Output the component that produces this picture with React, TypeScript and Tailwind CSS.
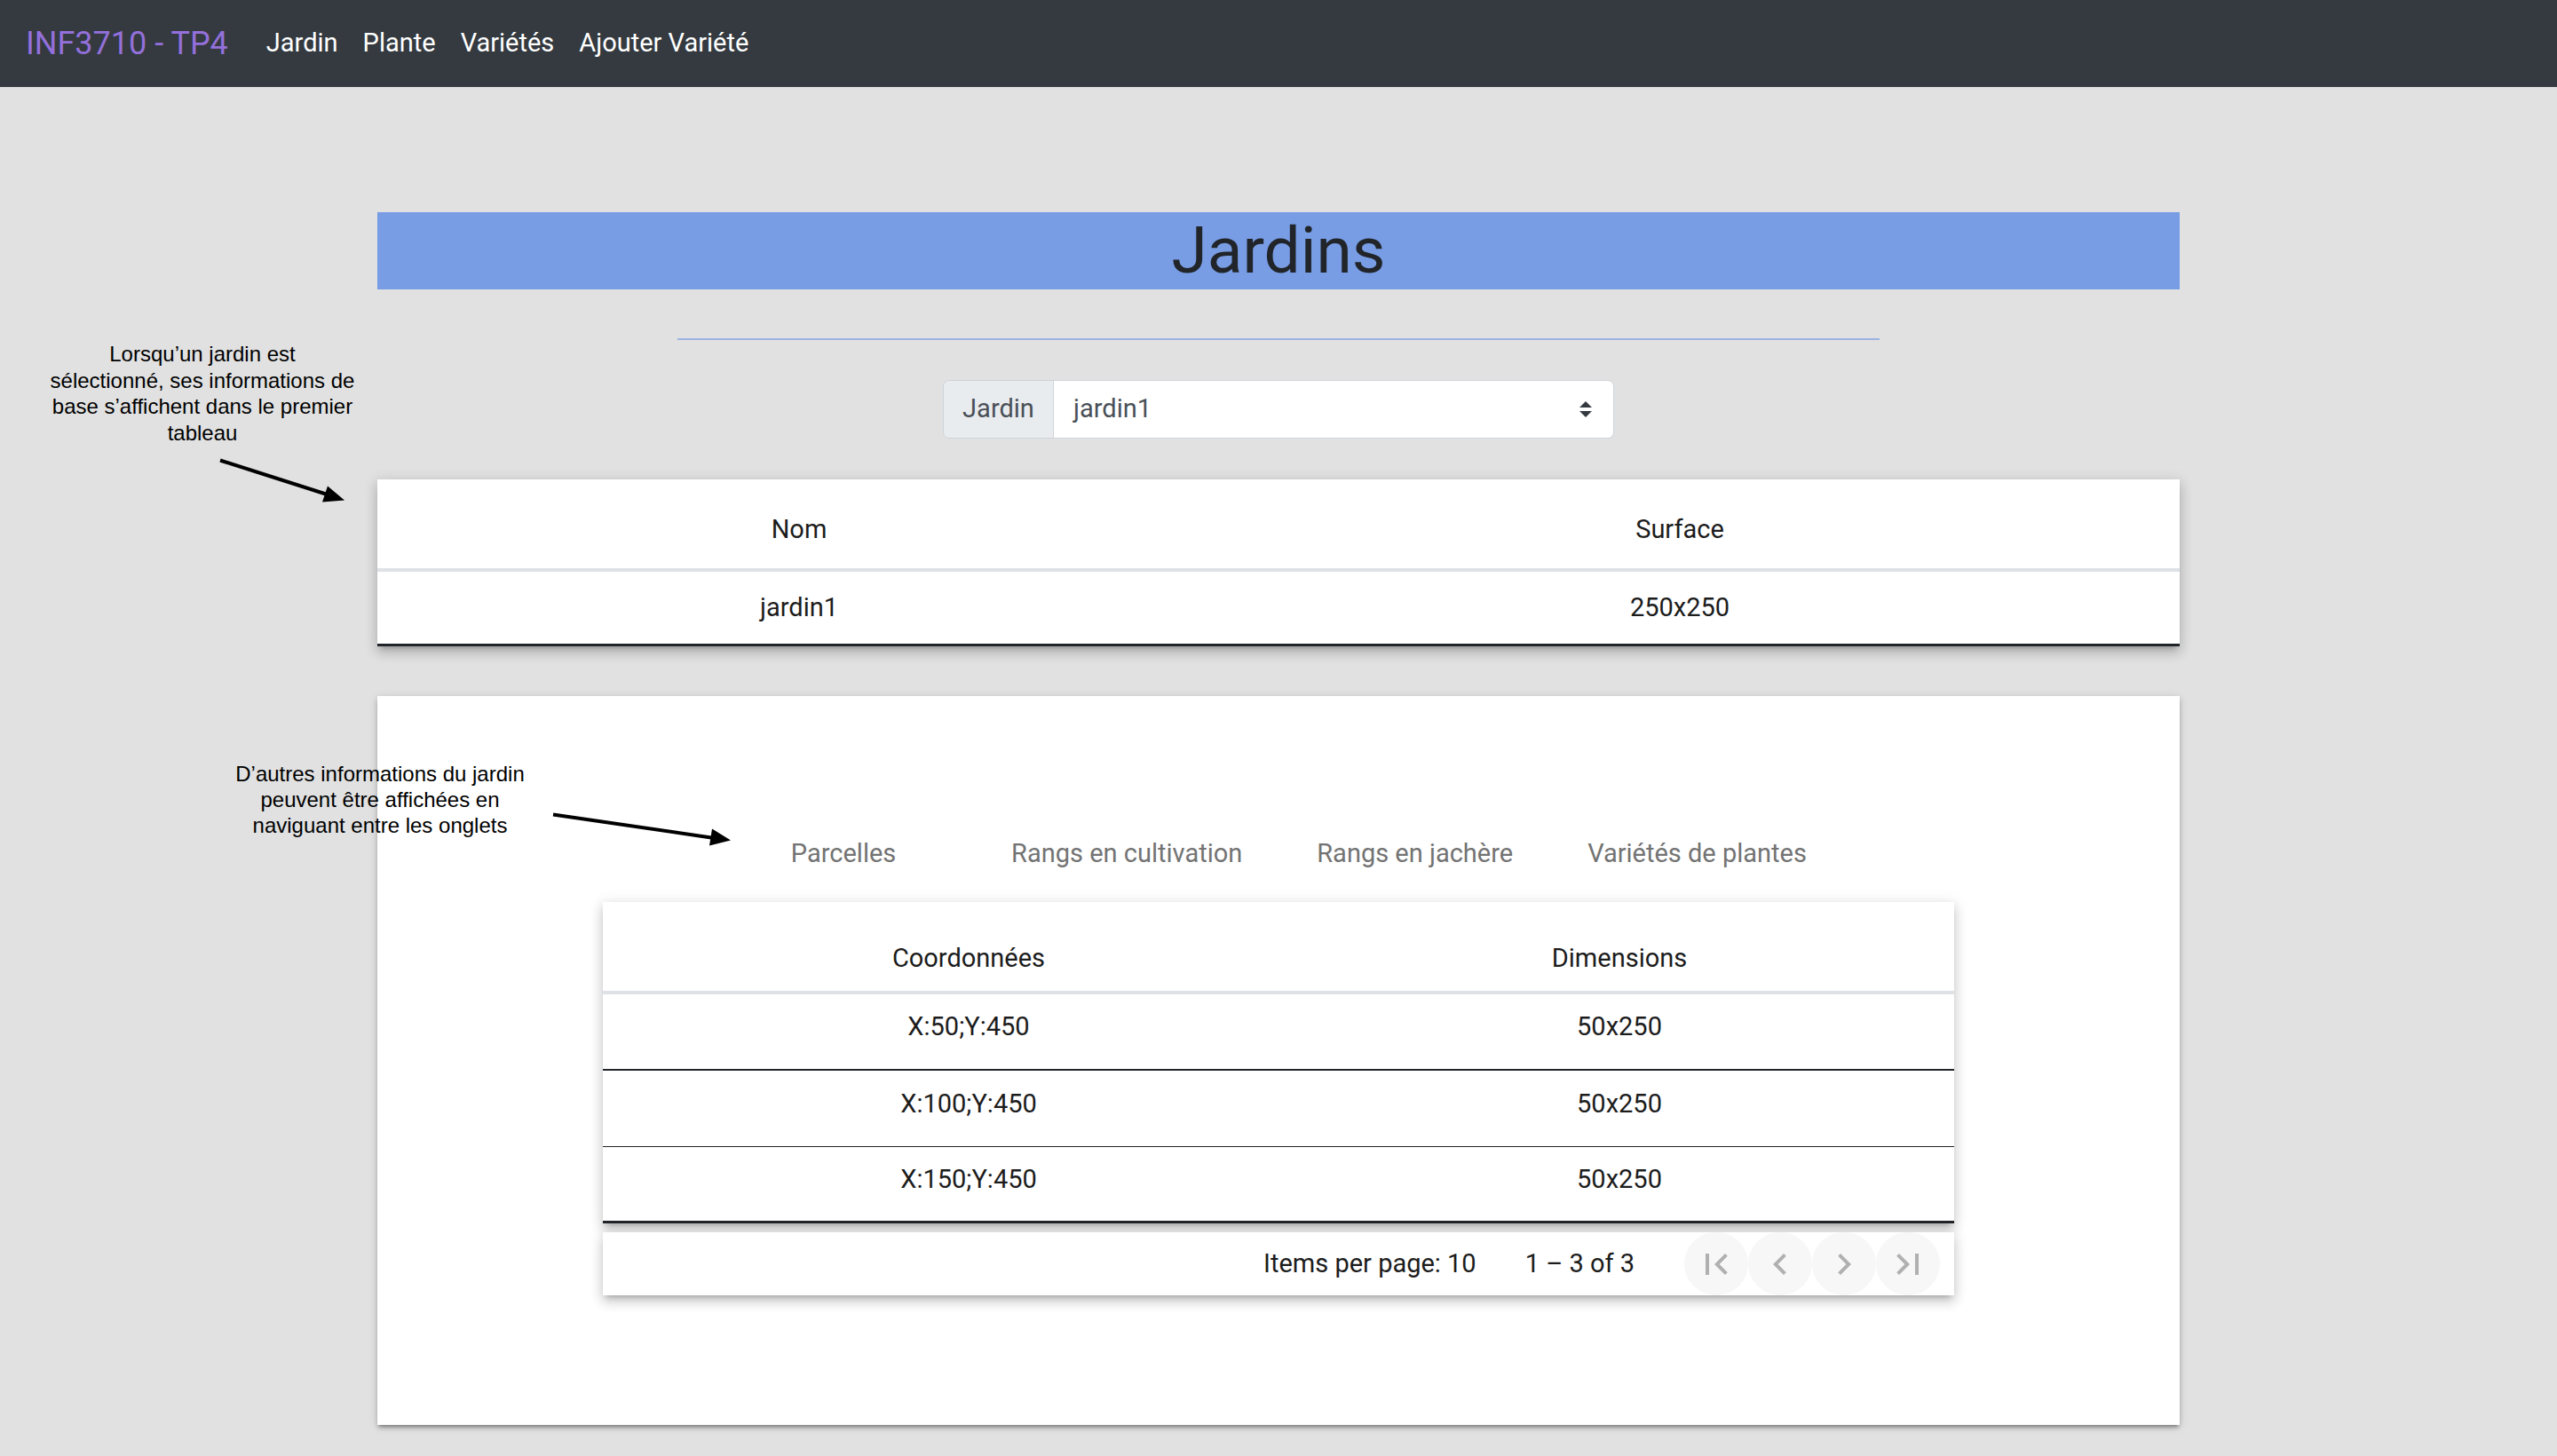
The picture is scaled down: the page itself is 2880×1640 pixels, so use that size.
import { ReactNode } from "react";

const navLinks = ["Jardin", "Plante", "Variétés", "Ajouter Variété"];
const tabs = ["Parcelles", "Rangs en cultivation", "Rangs en jachère", "Variétés de plantes"];
const parcelles = [
  { coord: "X:50;Y:450", dim: "50x250", border: "border-b-2" },
  { coord: "X:100;Y:450", dim: "50x250", border: "border-b" },
  { coord: "X:150;Y:450", dim: "50x250", border: "border-b-[3px]" },
];

const tableShadow =
  "shadow-[0_6px_6px_-4px_rgba(0,0,0,0.2),0_8px_12px_1px_rgba(0,0,0,0.12),0_2px_14px_2px_rgba(0,0,0,0.1)]";

function PagerButton({ children }: { children: ReactNode }) {
  return (
    <button className="w-[72px] h-[71px] rounded-full bg-[#f7f7f7] flex items-center justify-center">
      <svg viewBox="0 0 24 24" className="w-[48px] h-[48px] fill-[#b0b0b0]">
        {children}
      </svg>
    </button>
  );
}

function Annotations() {
  return (
    <>
      <p className="absolute left-[28px] top-[384px] w-[400px] text-center text-[24px] leading-[29.5px] text-black font-['Liberation_Sans',Arial,sans-serif]">
        Lorsqu’un jardin est
        <br />
        sélectionné, ses informations de
        <br />
        base s’affichent dans le premier
        <br />
        tableau
      </p>
      <p className="absolute left-[228px] top-[857px] w-[400px] text-center text-[24px] leading-[29px] text-black font-['Liberation_Sans',Arial,sans-serif]">
        D’autres informations du jardin
        <br />
        peuvent être affichées en
        <br />
        naviguant entre les onglets
      </p>
      <svg className="absolute inset-0 w-full h-full pointer-events-none" viewBox="0 0 2880 1640">
        <line x1="248" y1="518" x2="367" y2="556" stroke="black" strokeWidth="4" />
        <polygon points="388,563 369,547 363,565" fill="black" />
        <line x1="623" y1="917" x2="801" y2="943" stroke="black" strokeWidth="4" />
        <polygon points="823,946 802,933 799,952" fill="black" />
      </svg>
    </>
  );
}

export default function App() {
  return (
    <div className="relative min-h-screen bg-[#e1e1e1] font-['Roboto',sans-serif] text-[#212529]">
      {/* Navbar */}
      <nav className="h-[98px] bg-[#343a40] flex items-center pl-[29px]">
        <span className="text-[36px] text-[#9370db] mr-[29px]">INF3710 - TP4</span>
        <div className="flex items-center">
          {navLinks.map(l => (
            <a key={l} className="px-[14px] text-[29px] text-white">
              {l}
            </a>
          ))}
        </div>
      </nav>

      <main className="w-[2030px] mx-auto pt-[141px] pb-[36px]">
        {/* Title */}
        <h1 className="h-[87px] bg-[#789de5] text-center text-[73px] leading-[87px] font-normal text-[#212529]">
          Jardins
        </h1>
        <div className="w-[1354px] h-[2px] mx-auto mt-[55px] bg-[#9db3e2]" />

        {/* Jardin select */}
        <div className="mt-[45px] mx-auto w-[756px] h-[66px] flex rounded-[7px] border border-[#ced4da] overflow-hidden text-[29px] text-[#495057]">
          <div className="w-[124px] bg-[#e9ecef] border-r border-[#ced4da] flex items-center justify-center">
            Jardin
          </div>
          <div className="flex-1 bg-white flex items-center justify-between pl-[22px] pr-[24px]">
            <span>jardin1</span>
            <svg viewBox="0 0 14 18" className="w-[14px] h-[18px] fill-[#343a40]">
              <polygon points="0,7 7,0 14,7" />
              <polygon points="0,11 7,18 14,11" />
            </svg>
          </div>
        </div>

        {/* Garden info table */}
        <div className={`mt-[46px] bg-white ${tableShadow} text-[29px] text-[#1c1c1c]`}>
          <div className="h-[104px] grid grid-cols-[950px_1fr] items-center pt-[14px] border-b-4 border-[#dee2e6]">
            <div className="text-center">Nom</div>
            <div className="text-center pr-[46px]">Surface</div>
          </div>
          <div className="h-[84px] grid grid-cols-[950px_1fr] items-center border-b-[3px] border-[#212529]">
            <div className="text-center">jardin1</div>
            <div className="text-center pr-[46px]">250x250</div>
          </div>
        </div>

        {/* Details card with tabs */}
        <div className="mt-[56px] h-[821px] bg-white pt-[134px] shadow-[0_4px_4px_-2px_rgba(0,0,0,0.3),0_3px_5px_0_rgba(0,0,0,0.14),0_2px_10px_0_rgba(0,0,0,0.12)]">
          <div className="h-[88px] flex justify-center">
            {tabs.map(t => (
              <div
                key={t}
                className="min-w-[294px] px-[42px] flex items-center justify-center text-[29px] text-[#737373]"
              >
                {t}
              </div>
            ))}
          </div>

          <div className="w-[1522px] mx-auto mt-[10px]">
            <div className={`bg-white ${tableShadow} text-[29px] text-[#1c1c1c]`}>
              <div className="h-[104px] grid grid-cols-[824px_1fr] items-center pt-[28px] border-b-4 border-[#dee2e6]">
                <div className="text-center">Coordonnées</div>
                <div className="text-center pr-[56px]">Dimensions</div>
              </div>
              {parcelles.map(p => (
                <div
                  key={p.coord}
                  className={`h-[86px] grid grid-cols-[824px_1fr] items-center pb-[10px] ${p.border} border-[#212529]`}
                >
                  <div className="text-center">{p.coord}</div>
                  <div className="text-center pr-[56px]">{p.dim}</div>
                </div>
              ))}
            </div>

            {/* Paginator */}
            <div className={`mt-[10px] h-[71px] bg-white ${tableShadow} flex items-center justify-end pr-[16px] text-[29px] text-[#1c1c1c]`}>
              <span>Items per page: 10</span>
              <span className="ml-[55px]">1 – 3 of 3</span>
              <div className="ml-[56px] flex">
                <PagerButton>
                  <path d="M18.41 16.59L13.82 12l4.59-4.59L17 6l-6 6 6 6zM6 6h2v12H6z" />
                </PagerButton>
                <PagerButton>
                  <path d="M15.41 7.41L14 6l-6 6 6 6 1.41-1.41L10.83 12z" />
                </PagerButton>
                <PagerButton>
                  <path d="M10 6L8.59 7.41 13.17 12l-4.58 4.59L10 18l6-6z" />
                </PagerButton>
                <PagerButton>
                  <path d="M5.59 7.41L10.18 12l-4.59 4.59L7 18l6-6-6-6zM16 6h2v12h-2z" />
                </PagerButton>
              </div>
            </div>
          </div>
        </div>
      </main>

      <Annotations />
    </div>
  );
}
